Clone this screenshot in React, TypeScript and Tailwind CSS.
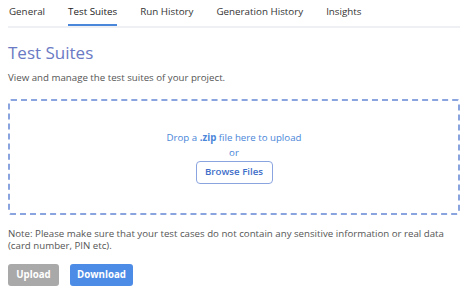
const tabs = ['General', 'Test Suites', 'Run History', 'Generation History', 'Insights'];

export default function App() {
  return (
    <div className="w-[474px] h-[296px] bg-white pl-[8px] pr-[14px] text-[#333]" style={{ fontFamily: '"Open Sans", "Noto Sans", sans-serif' }}>
      <div className="flex h-[28px] border-b-2 border-[#eef0f3]">
        {tabs.map((tab, i) => (
          <div
            key={tab}
            className={`mr-[23px] pt-[4px] text-[9.8px] leading-[16px] h-[26px] ${i === 1 ? 'border-b-2 border-[#4a86d9] text-[#222]' : 'text-[#333]'} ${i === 0 ? 'ml-[1px]' : ''}`}
          >
            {tab}
          </div>
        ))}
      </div>
      <h1 className="mt-[15px] text-[17px] leading-[20px] text-[#6a7ac4]">Test Suites</h1>
      <p className="mt-[8px] text-[9.7px] leading-[13px] text-[#555]">View and manage the test suites of your project.</p>
      <div className="mt-[15px] h-[116px] border-2 border-dashed border-[#8aa4e0] rounded-[3px] flex flex-col items-center justify-center">
        <div className="text-[9.7px] leading-[15px] text-[#4a86d9]">
          Drop a <span className="font-bold">.zip</span> file here to upload
        </div>
        <div className="text-[9.7px] leading-[15px] text-[#4a86d9]">or</div>
        <button className="mt-[1px] h-[23px] w-[77px] rounded-[4px] border border-[#8aa4e0] text-[9.7px] font-semibold text-[#3f6fc9] bg-white">
          Browse Files
        </button>
      </div>
      <p className="mt-[13px] text-[9.7px] leading-[12px] text-[#555]">
        Note: Please make sure that your test cases do not contain any sensitive information or real data (card number, PIN etc).
      </p>
      <div className="mt-[12px] flex gap-[11px]">
        <button className="h-[22px] w-[51px] rounded-[3px] bg-[#a9a9a9] text-white text-[9.7px] font-bold">Upload</button>
        <button className="h-[22px] w-[63px] rounded-[3px] bg-[#4d8ce6] text-white text-[9.7px] font-bold">Download</button>
      </div>
    </div>
  );
}
